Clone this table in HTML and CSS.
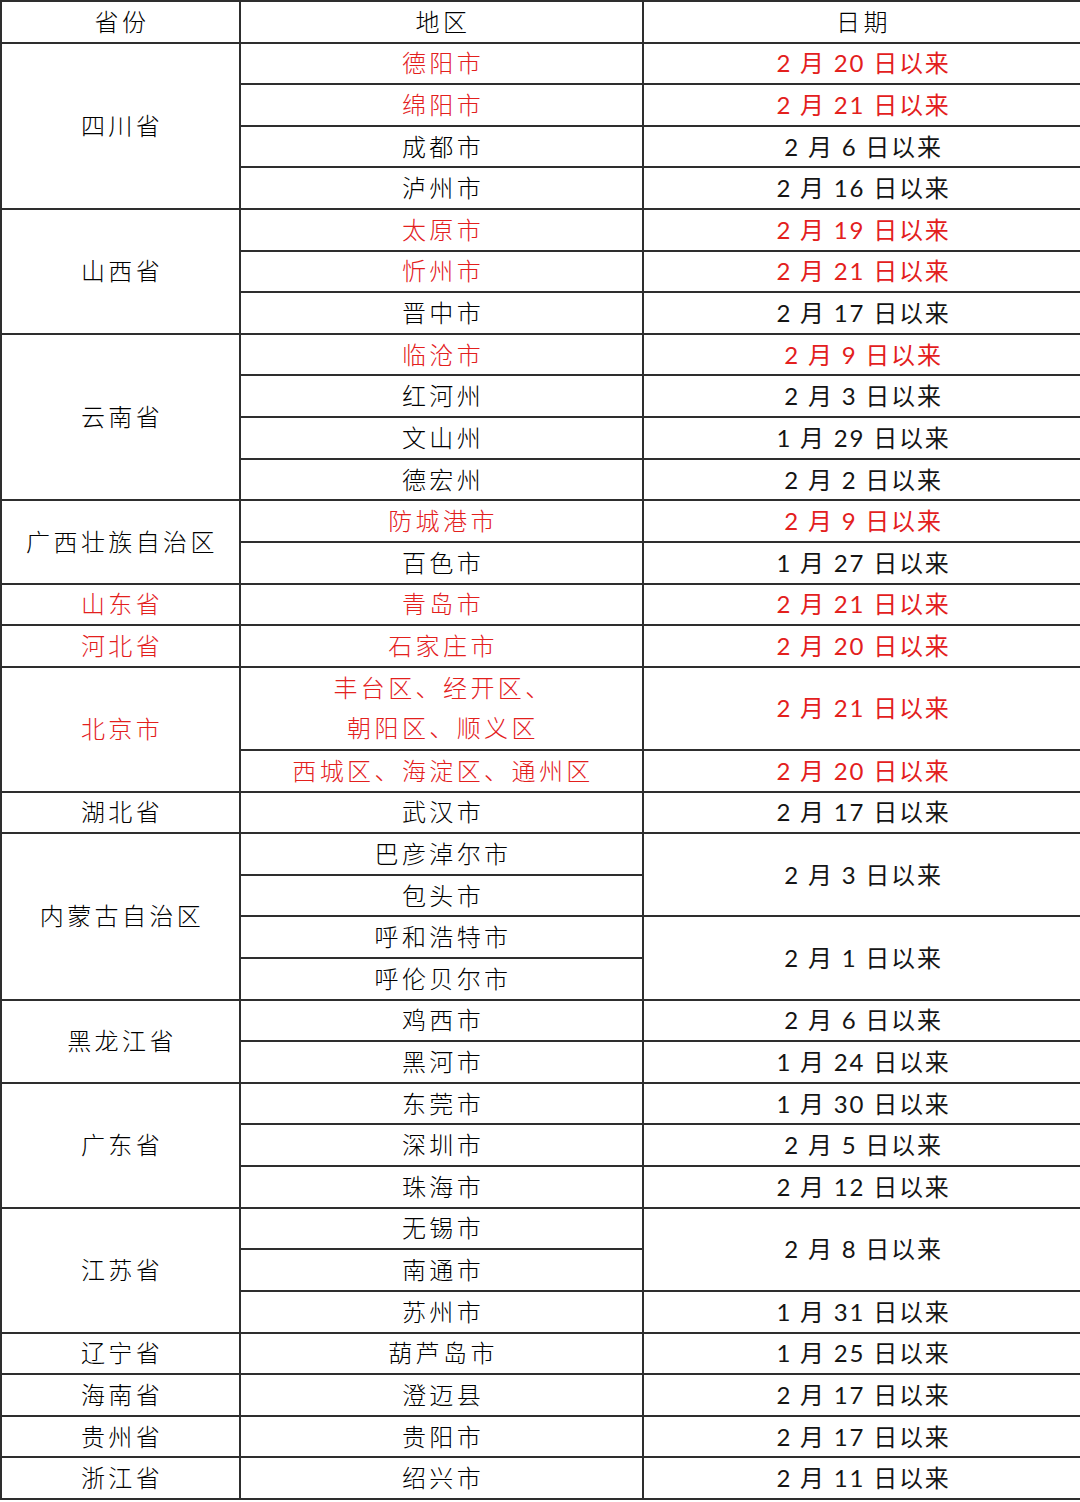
FILE: index.html
```html
<!DOCTYPE html>
<html lang="zh">
<head>
<meta charset="utf-8">
<link rel="stylesheet" href="styles.css">
</head>
<body>
<table class="tbl">
<colgroup><col class="c1"><col class="c2"><col class="c3"></colgroup>
<tr><th>省份</th><th>地区</th><th>日期</th></tr>
<tr><td rowspan="4">四川省</td><td class="red">德阳市</td><td class="red d">2 月 20 日以来</td></tr>
<tr><td class="red">绵阳市</td><td class="red d">2 月 21 日以来</td></tr>
<tr><td>成都市</td><td class="d">2 月 6 日以来</td></tr>
<tr><td>泸州市</td><td class="d">2 月 16 日以来</td></tr>
<tr><td rowspan="3">山西省</td><td class="red">太原市</td><td class="red d">2 月 19 日以来</td></tr>
<tr><td class="red">忻州市</td><td class="red d">2 月 21 日以来</td></tr>
<tr><td>晋中市</td><td class="d">2 月 17 日以来</td></tr>
<tr><td rowspan="4">云南省</td><td class="red">临沧市</td><td class="red d">2 月 9 日以来</td></tr>
<tr><td>红河州</td><td class="d">2 月 3 日以来</td></tr>
<tr><td>文山州</td><td class="d">1 月 29 日以来</td></tr>
<tr><td>德宏州</td><td class="d">2 月 2 日以来</td></tr>
<tr><td rowspan="2">广西壮族自治区</td><td class="red">防城港市</td><td class="red d">2 月 9 日以来</td></tr>
<tr><td>百色市</td><td class="d">1 月 27 日以来</td></tr>
<tr><td class="red">山东省</td><td class="red">青岛市</td><td class="red d">2 月 21 日以来</td></tr>
<tr><td class="red">河北省</td><td class="red">石家庄市</td><td class="red d">2 月 20 日以来</td></tr>
<tr class="tall"><td rowspan="2" class="red">北京市</td><td class="red two">丰台区、经开区、<br>朝阳区、顺义区</td><td class="red d">2 月 21 日以来</td></tr>
<tr><td class="red">西城区、海淀区、通州区</td><td class="red d">2 月 20 日以来</td></tr>
<tr><td>湖北省</td><td>武汉市</td><td class="d">2 月 17 日以来</td></tr>
<tr><td rowspan="4">内蒙古自治区</td><td>巴彦淖尔市</td><td rowspan="2" class="d">2 月 3 日以来</td></tr>
<tr><td>包头市</td></tr>
<tr><td>呼和浩特市</td><td rowspan="2" class="d">2 月 1 日以来</td></tr>
<tr><td>呼伦贝尔市</td></tr>
<tr><td rowspan="2">黑龙江省</td><td>鸡西市</td><td class="d">2 月 6 日以来</td></tr>
<tr><td>黑河市</td><td class="d">1 月 24 日以来</td></tr>
<tr><td rowspan="3">广东省</td><td>东莞市</td><td class="d">1 月 30 日以来</td></tr>
<tr><td>深圳市</td><td class="d">2 月 5 日以来</td></tr>
<tr><td>珠海市</td><td class="d">2 月 12 日以来</td></tr>
<tr><td rowspan="3">江苏省</td><td>无锡市</td><td rowspan="2" class="d">2 月 8 日以来</td></tr>
<tr><td>南通市</td></tr>
<tr><td>苏州市</td><td class="d">1 月 31 日以来</td></tr>
<tr><td>辽宁省</td><td>葫芦岛市</td><td class="d">1 月 25 日以来</td></tr>
<tr><td>海南省</td><td>澄迈县</td><td class="d">2 月 17 日以来</td></tr>
<tr><td>贵州省</td><td>贵阳市</td><td class="d">2 月 17 日以来</td></tr>
<tr><td>浙江省</td><td>绍兴市</td><td class="d">2 月 11 日以来</td></tr>
</table>
</body>
</html>
```
FILE: styles.css
```css
html, body {
  margin: 0;
  padding: 0;
  background: #ffffff;
}
.tbl {
  width: 1080px;
  height: 1500px;
  border-collapse: collapse;
  table-layout: fixed;
  border: 2px solid #2e2e2e;
  font-family: Lato, "Noto Sans CJK SC", sans-serif;
  font-size: 24px;
  font-weight: 300;
  color: #000000;
}
.c1 { width: 239px; }
.c2 { width: 403px; }
.c3 { width: 438px; }
.tbl tr {
  height: 41px;
}
.tbl tr.tall {
  height: 82px;
}
.tbl th, .tbl td {
  border: 2px solid #2e2e2e;
  padding: 0 0 0 3px;
  text-align: center;
  vertical-align: middle;
  font-weight: 300;
  letter-spacing: 3.4px;
  line-height: 30px;
  white-space: nowrap;
}
.tbl td.d {
  letter-spacing: 1.8px;
  font-weight: 400;
  color: #151515;
}
.tbl .red, .tbl td.d.red {
  color: #e3201d;
}
.tbl .two {
  line-height: 40px;
}
```
